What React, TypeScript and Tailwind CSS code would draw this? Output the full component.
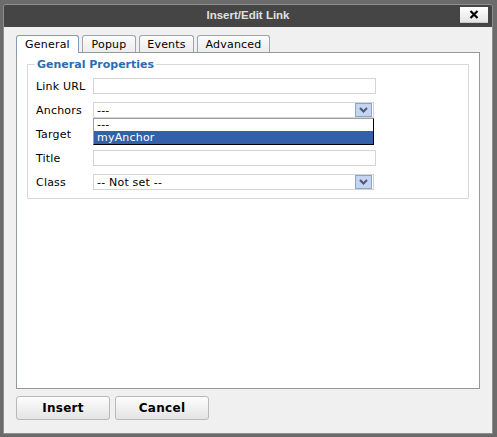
import React from "react";

function Chevron() {
  return (
    <svg width="9" height="6" viewBox="0 0 9 6" className="block">
      <path d="M1 1 L4.5 4.5 L8 1" fill="none" stroke="#4a5a78" strokeWidth="2" />
    </svg>
  );
}

function SelectBox({ value }: { value: string }) {
  return (
    <div className="relative h-[16px] w-[281px] border border-[#d4d4d4] bg-white flex items-center">
      <span className="pl-[3px] text-[11px] leading-none text-black tracking-[0.2px]">{value}</span>
      <div className="absolute right-[1px] top-[0px] h-[14px] w-[17px] border border-[#8ea3c6] bg-[#c3d5f0] flex items-center justify-center">
        <Chevron />
      </div>
    </div>
  );
}

function TextBox() {
  return <div className="h-[16px] w-[283px] border border-[#d4d4d4] bg-white" />;
}

function Row({ label, children }: { label: string; children: React.ReactNode }) {
  return (
    <div className="flex items-center h-[16px]">
      <div className="w-[57px] text-[11px] leading-none text-black tracking-[0.2px]">{label}</div>
      {children}
    </div>
  );
}

export default function App() {
  return (
    <div className="w-[497px] h-[437px] bg-[#6b6b6b] pt-[4px] pl-[3px] font-['DejaVu_Sans',sans-serif]">
      <div className="w-[490px] h-[430px] flex flex-col border border-[#8e8e8e] rounded-t-[3px] overflow-hidden">
        {/* title bar */}
        <div className="relative h-[22px] bg-[#454545] flex items-center justify-center shrink-0">
          <span className="font-['Liberation_Sans',sans-serif] font-bold text-[11.5px] text-[#e0e0e0]">Insert/Edit Link</span>
          <div className="absolute right-[4px] top-[2px] h-[16px] w-[28px] bg-gradient-to-b from-[#ffffff] to-[#e4e4e4] border-b border-[#c8c8c8] flex items-center justify-center">
            <svg width="10" height="9" viewBox="0 0 10 9">
              <path d="M1.5 1 L8.5 8 M8.5 1 L1.5 8" stroke="#000" strokeWidth="2.2" />
            </svg>
          </div>
        </div>
        {/* body */}
        <div className="flex-1 bg-[#f0f0f0] pl-[12px] pr-[11px] pt-[8px] flex flex-col">
          {/* tabs */}
          <div className="flex items-end h-[17px] relative z-10">
            <div className="h-[18px] w-[63px] bg-white border border-b-0 border-[#7f9db9] rounded-t-[3px] flex items-center justify-center text-[11px] leading-none text-black mb-[-1px] tracking-[0.2px]">
              General
            </div>
            <div className="ml-[3px] h-[17px] w-[54px] bg-gradient-to-b from-[#fcfcfc] to-[#ececec] border border-b-0 border-[#9aa6ae] rounded-t-[3px] flex items-center justify-center text-[11px] leading-none text-black tracking-[0.2px]">
              Popup
            </div>
            <div className="ml-[3px] h-[17px] w-[55px] bg-gradient-to-b from-[#fcfcfc] to-[#ececec] border border-b-0 border-[#9aa6ae] rounded-t-[3px] flex items-center justify-center text-[11px] leading-none text-black tracking-[0.2px]">
              Events
            </div>
            <div className="ml-[3px] h-[17px] w-[73px] bg-gradient-to-b from-[#fcfcfc] to-[#ececec] border border-b-0 border-[#9aa6ae] rounded-t-[3px] flex items-center justify-center text-[11px] leading-none text-black tracking-[0.2px]">
              Advanced
            </div>
          </div>
          {/* panel */}
          <div className="h-[337px] w-[464px] bg-white border border-[#919b9c] px-[10px] pt-[5px]">
            <fieldset className="border border-[#d8d8d8] px-[8px] pb-[8px] pt-[7px]">
              <legend className="px-[2px] ml-[-1px] text-[11px] leading-[13px] font-bold text-[#2b6cb5]">General Properties</legend>
              <div className="flex flex-col gap-[8px] relative">
                <Row label="Link URL">
                  <TextBox />
                </Row>
                <Row label="Anchors">
                  <SelectBox value="---" />
                </Row>
                <Row label="Target">
                  <SelectBox value="" />
                </Row>
                <Row label="Title">
                  <TextBox />
                </Row>
                <Row label="Class">
                  <SelectBox value="-- Not set --" />
                </Row>
                {/* open dropdown list */}
                <div className="absolute left-[57px] top-[40px] w-[281px] bg-white border-t border-l border-t-[#a0a0a0] border-l-[#a0a0a0] border-r border-b border-r-black border-b-black">
                  <div className="h-[12px] pl-[3px] text-[11px] leading-[12px] text-black tracking-[0.2px]">---</div>
                  <div className="h-[13px] pl-[3px] text-[11px] leading-[13px] text-white bg-[#3360a8] tracking-[0.2px]">myAnchor</div>
                </div>
              </div>
            </fieldset>
          </div>
          {/* buttons */}
          <div className="flex gap-[5px] mt-[7px]">
            <button className="h-[24px] w-[94px] rounded-[3px] border border-[#b8b8b8] bg-gradient-to-b from-[#fdfdfd] to-[#e4e4e4] text-[12px] font-bold text-black tracking-[0.3px]">
              Insert
            </button>
            <button className="h-[24px] w-[94px] rounded-[3px] border border-[#b8b8b8] bg-gradient-to-b from-[#fdfdfd] to-[#e4e4e4] text-[12px] font-bold text-black tracking-[0.3px]">
              Cancel
            </button>
          </div>
        </div>
      </div>
    </div>
  );
}
